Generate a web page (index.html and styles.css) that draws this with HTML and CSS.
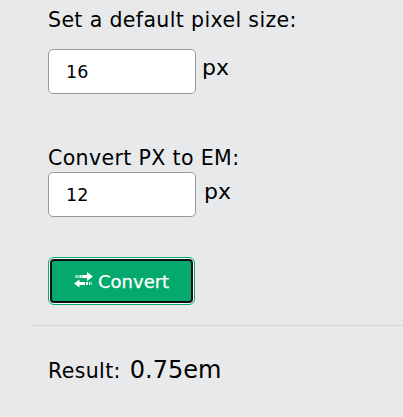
FILE: index.html
```html
<!DOCTYPE html>
<html lang="en">
<head>
<meta charset="utf-8">
<title>PX to EM converter</title>
<link rel="stylesheet" href="styles.css">
</head>
<body>
<main class="converter">
  <section class="field">
    <label class="label" for="base">Set a default pixel size:</label>
    <div class="row row-base"><input class="input" id="base" type="text" value="16"><span class="unit">px</span></div>
  </section>
  <section class="field field-px">
    <label class="label label-px" for="px">Convert PX to EM:</label>
    <div class="row row-px"><input class="input" id="px" type="text" value="12"><span class="unit">px</span></div>
  </section>
  <button class="button" type="button">
    <svg class="icon" viewBox="0 0 19 16" width="19" height="16" aria-hidden="true">
      <path d="M1.5 3h1v3h-1zM3.5 3h1v3h-1zM5.5 3h2v3h-2zM8.2 3H13V0l6 4.5L13 9V6H8.200z"/>
      <path d="M0 11.500L5.500 7.500v2.500h5.500v3H5.500v2.500zM12 10h2v3h-2zM15 10h1v3h-1zM16.800 10h.8v3h-.8z"/>
    </svg>
    <span class="caption">Convert</span>
  </button>
</main>
<section class="result"><span class="result-label">Result:</span><span class="result-value">0.75em</span></section>
</body>
</html>
```
FILE: styles.css
```css
body {
  margin: 0;
  height: 417px;
  overflow: hidden;
  background: #e7e9eb;
  color: #000;
  font-family: Verdana, "DejaVu Sans", sans-serif;
}

.converter {
  height: 305px;
  padding-left: 48px;
}

.label {
  display: block;
  padding-top: 6px;
  font-size: 20.5px;
  letter-spacing: 0.37px;
  line-height: 28px;
  white-space: nowrap;
}

.row {
  display: flex;
  height: 45px;
}

.row-base {
  gap: 6px;
  margin-top: 15px;
}

.row-px {
  gap: 8px;
}

.input {
  box-sizing: border-box;
  width: 148px;
  height: 45px;
  padding: 0 17px;
  border: 1px solid #999;
  border-radius: 5px;
  background: #fff;
  color: #000;
  font: 17.5px Verdana, "DejaVu Sans", sans-serif;
}

.unit {
  font-size: 22px;
  line-height: 38px;
}

.row-px .unit {
  line-height: 40px;
}

.field-px {
  margin-top: 44px;
}

.button {
  box-sizing: border-box;
  display: flex;
  align-items: center;
  gap: 5px;
  width: 143px;
  height: 44px;
  margin: 42px 0 0 2px;
  padding: 0 0 0 22px;
  border: 2px solid #101010;
  border-radius: 4px;
  outline: 1px solid #04aa6d;
  outline-offset: 1px;
  background: #04aa6d;
  box-shadow: 0 0 0 1px #fff;
  color: #fff;
  font: 18px Verdana, "DejaVu Sans", sans-serif;
}

.icon {
  margin-top: -3px;
  fill: #fff;
}

.caption {
  -webkit-text-stroke: 0.25px #fff;
}

.result {
  display: flex;
  align-items: baseline;
  gap: 9px;
  margin: 20px 0 0 32px;
  padding: 27px 0 0 16px;
  border-top: 1px solid #d3d5d7;
  line-height: 34px;
}

.result-label {
  font-size: 20.5px;
  letter-spacing: 0.37px;
}

.result-value {
  font-size: 24px;
}
```
